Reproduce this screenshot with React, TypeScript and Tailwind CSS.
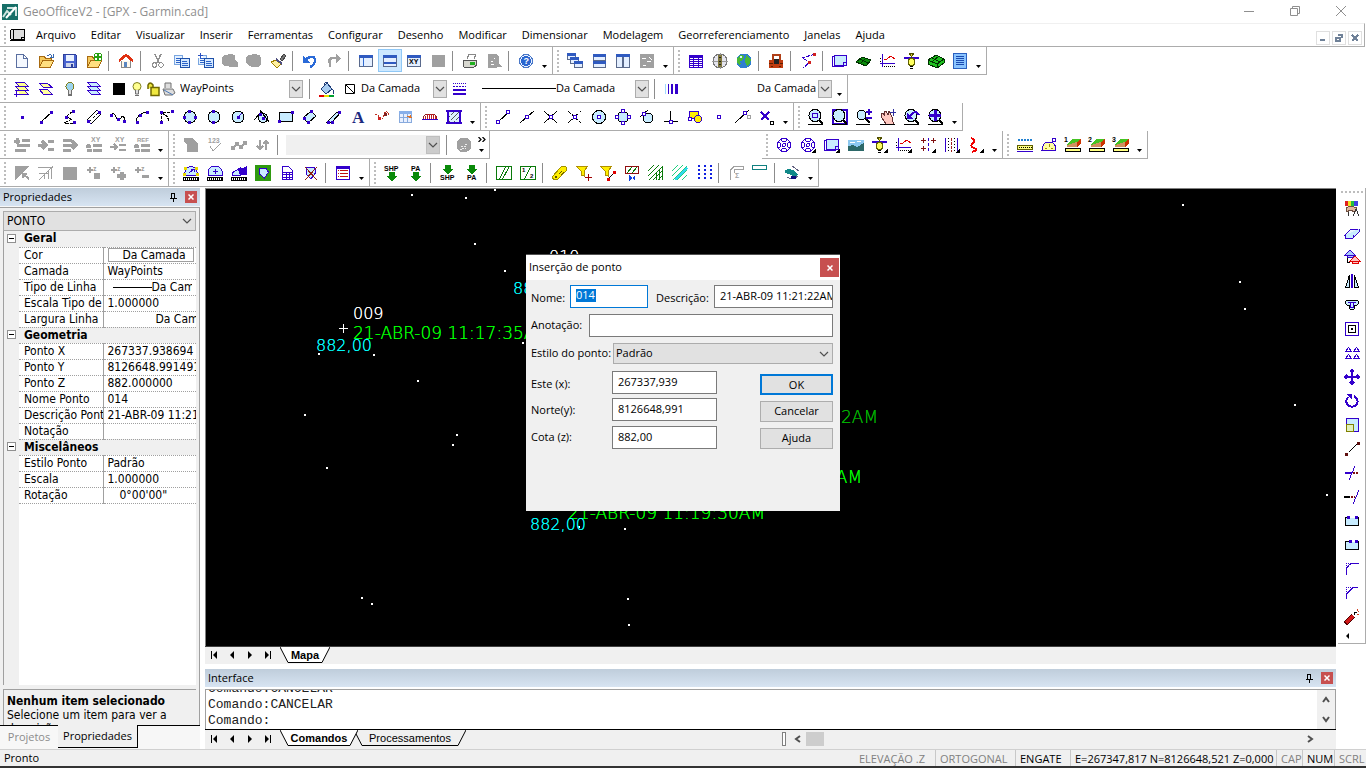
import { useState } from 'react';
import type { ReactNode } from 'react';

const INK = '#3300cc';
const SKY = '#c8ecff';
const GRAY = '#a0a0a0';

type PProps = { d: string; s?: string; f?: string; w?: number; dash?: string };

// Short path helper, all icons are drawn on a 16x16 grid
const P = ({ d, s = INK, f = 'none', w = 1, dash }: PProps) => (
  <path d={d} stroke={s} fill={f} strokeWidth={w} strokeDasharray={dash} />
);
const Dot = ({ x, y, c = INK }: { x: number; y: number; c?: string }) => (
  <rect x={x - 1} y={y - 1} width="3" height="3" fill={c} />
);
const Ring = ({ x, y, c = INK }: { x: number; y: number; c?: string }) => (
  <rect x={x - 1.5} y={y - 1.5} width="3" height="3" fill="#fff" stroke={c} />
);
const T = ({ x, y, c = '#000', size = 7, children }: { x: number; y: number; c?: string; size?: number; children: ReactNode }) => (
  <text x={x} y={y} fill={c} fontSize={size} fontFamily="Liberation Sans, sans-serif" fontWeight="bold">{children}</text>
);
const Corner = () => <P d="M16 11v5h-5z" s="none" f="#000" />;
const Lens = () => (
  <>
    <circle cx="7" cy="6.5" r="6" fill={SKY} stroke="#000" />
    <P d="M11 11l4 4" s="#000" w={2} />
    <P d="M0 15.5h15" s="#000" />
  </>
);
const Layers = ({ f }: { f: string }) => (
  <>
    <P d="M1.5 9.5h9l4 4h-9z" f={f} />
    <P d="M1.5 5.5h9l4 4h-9z" f={f} />
    <P d="M1.5 1.5h9l4 4h-9z" f={f} />
  </>
);
const Bulb = ({ c }: { c: string }) => (
  <>
    <circle cx="8" cy="5.5" r="4" fill={c} stroke="#808020" />
    <P d="M6.5 9v4h3V9M6 14.5h4" s="#707070" f="#ddd" />
  </>
);
const Folder = () => (
  <>
    <P d="M1.5 14V3.5h5l1 2h6V8" s="#a86a10" f="#f5c95c" />
    <P d="M1.5 14.5l3-7h11l-3 7z" s="#a86a10" f="#ffdf80" />
  </>
);
const Ramp = ({ n }: { n: string }) => (
  <>
    <P d="M2 10V7l5-5h9v2l-4 6z" s="none" f="#44c422" />
    <P d="M2 10V8l10-3v5z" s="none" f="#d09060" />
    <P d="M12 10V5l4-3v4z" s="none" f="#cc3300" />
    <rect x="0.5" y="11.5" width="15" height="3" fill="#ffff80" stroke="#000" />
    <T x={-1} y={5}>{n}</T>
  </>
);
const Pages = () => (
  <>
    <rect x="0.5" y="2.5" width="8" height="9" fill="#e4f1ff" stroke="#7aa6e0" />
    <rect x="6.5" y="5.5" width="9" height="9" fill="#d4e8ff" stroke="#1e50a8" />
    <P d="M2 5.5h4M2 7.5h4M2 9.5h4M8 8.5h5M8 10.5h6M8 12.5h6" s="#2a62c8" />
  </>
);
const Win = ({ x, y, w, h }: { x: number; y: number; w: number; h: number }) => (
  <>
    <rect x={x + 0.5} y={y + 0.5} width={w - 1} height={h - 1} fill="#e4efff" stroke="#5a6a8c" />
    <rect x={x} y={y} width={w} height="3" fill="#2f5ac0" />
  </>
);
const Target = () => (
  <>
    <circle cx="8" cy="8" r="6.5" stroke={INK} fill="#fff" />
    <circle cx="8" cy="8" r="1.5" stroke={INK} fill="none" />
    <P d="M5.5 2.5q0 2 2.5 2t2.5-2M2.5 5.5q2 0 2 2.5t-2 2.5M13.5 5.5q-2 0-2 2.5t2 2.5M5.5 13.5q0-2 2.5-2t2.5 2" />
  </>
);
const Plan = () => (
  <>
    <rect x="2.5" y="2.5" width="12" height="10" fill={SKY} stroke={INK} />
    <P d="M2.5 3.5H.5v10h11M11.5 12V9.5h3" />
  </>
);
const Profile = () => (
  <>
    <P d="M2.5 1v13M0 10.5h15" />
    <P d="M4 7l3-1 4-3 4 3" s="#e00000" />
    <P d="M4 13.5h11M0 5.5h2M0 8.5h2" s="#000" dash="1 1" />
  </>
);
const Lamp = () => (
  <>
    <P d="M0 5h15" w={2} />
    <P d="M5 0h5l-2.5 4z" s="#505000" f="#d8c830" />
    <circle cx="7.5" cy="9" r="3.5" fill="#ffff60" stroke="#606000" />
    <P d="M6 13.5h3M6 15.5h3" s="#000" />
  </>
);
const Measure = ({ children }: { children: ReactNode }) => (
  <>
    {children}
    <rect x="0.5" y="12.5" width="15" height="3" fill="#fff" stroke="#000" />
    <P d="M2 14h13" s="#000" dash="1 1" w={2} />
  </>
);
const Hatch = ({ s }: { s: string }) => <P d="M0 6l6-6M0 11L11 0M1 15L15 1M5 15L15 5M10 15l5-5" s={s} />;
const Arrow = ({ y }: { y: number }) => <P d={`M5 ${y}h6v4h3l-6 5-6-5h3z`} s="none" f="#0a8a0a" />;
const Funnel = () => <P d="M.5 1.5h11L8 6v5l-3-1V6z" s="#b09000" f="#ffee00" />;

const icons: Record<string, ReactNode> = {
  novo: <P d="M2.5 1.5h7l4 4v9h-11zM9.5 1.5v4h4" s="#5a6fa0" f="#f4f8ff" />,
  abrir: <><Folder /><P d="M9 3q4-3 5 1M12 4h3V1" s="#3a6ab0" /></>,
  salvar: <><P d="M1.5 1.5h12l1 1v12h-13z" s="#2c3f9c" f="#4a64d0" /><rect x="4" y="2" width="8" height="6" fill="#eaf2ff" /><rect x="4" y="10" width="8" height="4" fill="#cfd6ea" /><rect x="9" y="11" width="2" height="3" fill="#2c3f9c" /></>,
  adicionar: <><Folder /><circle cx="12" cy="4" r="4" fill="#fff" stroke="#28a010" /><P d="M12 1v6M9 4h6" s="#28a010" w={2} /></>,
  inicio: <><P d="M3.5 8v6.5h9V8" s="#888" f="#fff8ea" /><P d="M1 8l7-6 7 6" s="#e03010" w={2.5} /><rect x="6" y="9" width="3" height="5" fill="#5a86c0" /></>,
  recortar: <><P d="M5 1l4 9M11 1L7 10" s="#909090" w={1.5} /><circle cx="4.5" cy="12" r="2.2" stroke="#909090" fill="none" /><circle cx="11" cy="12" r="2.2" stroke="#909090" fill="none" /></>,
  copiar: <Pages />,
  copiarBase: <><Pages /><rect x="0" y="0" width="5" height="5" fill="#fff" /><P d="M2.5 0v5M0 2.5h5" s="#2a50c0" /></>,
  colar: <P d="M2 2h3l1-1h4l1 1h2v5l3 3v4H7l-1-1H2L0 10V4z" s="none" f={GRAY} />,
  colarEspecial: <P d="M2 2h3l1-1h4l1 1h3l1 3v6l-3 3H6l-4-2-2-3V4z" s="none" f={GRAY} />,
  pincel: <><P d="M10 6l4-5 2 2-4 5z" s="#444" f="#777" /><P d="M1 9l5-2 5 4-4 4z" s="#a08000" f="#fff0a0" /><P d="M6 6l6 5" s="#505080" w={2} /></>,
  desfazer: <><P d="M4 6q8-5 9 1 0 5-5 7" s="#2a6ad8" w={2.5} /><P d="M1 3v7h7z" s="none" f="#2a6ad8" /></>,
  refazer: <><P d="M11 5H6Q2 6 4 11v3" s={GRAY} w={2.5} /><P d="M10 1l5 4-5 5z" s="none" f={GRAY} /></>,
  painelEsq: <><Win x={1} y={2} w={14} h={12} /><P d="M5.5 5v8" s="#2f6ad0" /></>,
  painelInf: <><Win x={1} y={2} w={14} h={12} /><P d="M2 10h12" s="#2f5ac0" w={2} /></>,
  painelXY: <><Win x={1} y={2} w={14} h={12} /><T x={3} y={11} size={7}>XY</T></>,
  quadro: <rect x="2" y="2" width="13" height="12" fill={GRAY} />,
  imprimir: <><P d="M5 6l2-5h7l-2 5" s="#888" f="#fff" /><P d="M1 7h13l1 5-3 2H2z" s="#555" f="#d8d8d0" /><rect x="8" y="9" width="5" height="3" fill="#20b020" /></>,
  visualizarImp: <><P d="M2 1h8l3 3v6l3 4h-5l-1 1H2z" s="none" f={GRAY} /><P d="M5 8h2M8 5h1M5 11h3" s="#fff" /></>,
  ajuda: <><circle cx="8" cy="8" r="6.5" fill="#e8f0ff" stroke="#4a78c8" /><circle cx="8" cy="8" r="5" fill="#2a66d0" /><T x={5.5} y={11} c="#fff" size={9}>?</T></>,
  cascata: <><Win x={0} y={0} w={9} h={7} /><Win x={3} y={4} w={9} h={7} /><Win x={7} y={8} w={9} h={7} /></>,
  ladoH: <><Win x={2} y={1} w={13} h={7} /><Win x={2} y={8} w={13} h={7} /></>,
  ladoV: <><Win x={1} y={1} w={7} h={14} /><Win x={8} y={1} w={7} h={14} /></>,
  organizar: <><rect x="1" y="1" width="14" height="14" fill={GRAY} /><P d="M3 5h4M8 8h4M10 4l3 3M4 12h3" s="#fff" /></>,
  tabela: <><rect x="1" y="2" width="14" height="13" fill={INK} /><P d="M2 5.5h12M2 7.5h12M2 9.5h12M2 11.5h12M2 13.5h12" s="#fff" dash="3 1 4 1" /></>,
  bussola: <><circle cx="8" cy="8" r="7" fill="#e4e4ee" stroke="#777" /><P d="M0 8h16M8 0v16" s="#999" /><rect x="6" y="2" width="4" height="12" fill="#807840" /><P d="M7 4h2M7 8h2M7 11h2" s="#222" /></>,
  globo: <><circle cx="8" cy="8" r="7.5" fill="#2f7ed0" /><P d="M1 5q5-5 7-2l-1 4-3 1 1 3-2 1Q0 9 1 5zM10 2l5 4-1 5-3 2-2-4z" s="none" f="#48b838" /><circle cx="5" cy="4" r="1.5" fill="#d8f4ff" /></>,
  maleta: <><P d="M5 7V2h7v5" s="#b04018" w={2} /><P d="M1 7h14v8H1z" s="none" f="#c03c10" /><rect x="6" y="6" width="5" height="5" fill="#222" /><P d="M1 10h4M12 10h3M3 13h2M11 13h2" s="#602000" /></>,
  poligonal: <><P d="M15 1L2 5l8 4-7 6" dash="4 1" /><Dot x={14} y={1} c="#d02020" /><Dot x={9} y={9} c="#d02020" /></>,
  planta: <Plan />,
  terreno: <><P d="M0 9l6-5 9 3-5 6z" s="#003000" f="#0a8a0a" /><P d="M4 6l8 4M10 5l-6 6" s="#003000" /></>,
  perfil: <Profile />,
  secao: <Lamp />,
  terreno3d: <><P d="M0 7l8-5 8 4v4l-7 5-9-4z" s="#003000" f="#20c020" /><P d="M0 7l9 4 7-5M9 11v4M4 5l8 4M11 3L4 9" s="#003000" /></>,
  relatorio: <><rect x="1.5" y="0.5" width="13" height="15" fill="#8ac4ff" stroke="#2a60c0" /><P d="M4 3.5h8M4 5.5h8M4 7.5h8M4 9.5h8M4 11.5h8" s="#1a4ab0" /></>,

  camadaAtual: <><Layers f="#ffff90" /><rect x="0" y="11" width="5" height="5" fill="#fff" /><P d="M0 13.5h5M2.5 11v5" s={INK} /></>,
  camadas: <P d="M1.5 2.5h8l5 4h-9zM1.5 8.5h8l5 5h-9z" f="#ffffa0" />,
  lampada: <Bulb c="#9cd4ee" />,
  camadasAzul: <Layers f={SKY} />,
  balde: <><P d="M2 8l6-6 5 6-6 5z" s="#1e3c78" f="#a8ccf0" /><P d="M5 5q0-5 4-3M13 8q3 2 1 5" s="#1e3c78" /><P d="M0 15h5" s="#e00000" w={2} /><P d="M5 15h5" s="#e8e000" w={2} /><P d="M10 15h5" s="#00a030" w={2} /></>,
  tipoLinha: <><P d="M2 2.5h13" dash="1 1" /><P d="M2 5.5h13" dash="2 1" /><P d="M2 9h13M2 13h13" w={2} /></>,
  espessura: <><P d="M1.5 3v10" s="#a0d8ff" /><P d="M4.5 3v10" /><P d="M8 3v10" w={2} /><P d="M12.5 3v10" w={3} /></>,

  ponto: <Dot x={8} y={8} />,
  linha: <><P d="M3 13L14 3" s="#000" /><Dot x={3} y={13} /><Dot x={13} y={3} /></>,
  polilinha: <><P d="M11 2L4 8l6 2-8 4h12" s="#000" dash="4 1" /><Dot x={11} y={2} /><Dot x={4} y={8} /><Dot x={12} y={13} /></>,
  dupla: <><P d="M1 11L11 1M5 15L15 5" s="#000" /><P d="M3 13L13 3" s="#000" dash="3 2" /><P d="M1 11l4 4M11 1l4 4" /><Dot x={2} y={12} /><Dot x={13} y={3} /></>,
  spline: <><P d="M1 6q3-4 5 2t5 1 4 4" s="#000" /><Dot x={1} y={6} /><Dot x={8} y={10} /><Dot x={14} y={12} /></>,
  arco: <><P d="M2 13Q3 4 14 3" s="#000" /><Dot x={3} y={13} /><Dot x={6} y={6} /><Dot x={13} y={3} /></>,
  arcoTan: <><P d="M3.5 14V3.5h12M4 4q6 2 7 9M4 4l6 4" s="#000" dash="3 1" /><Dot x={3} y={3} /><Dot x={14} y={2} /><Dot x={3} y={13} /></>,
  circulo3: <><circle cx="8" cy="8" r="6" fill={SKY} stroke="#000" /><Dot x={7} y={2} /><Dot x={2} y={8} /><Dot x={13} y={8} /><Dot x={7} y={13} /></>,
  circulo2: <><circle cx="8" cy="8" r="6" fill={SKY} stroke="#000" /><Dot x={7} y={2} /><Dot x={7} y={13} /></>,
  circuloR: <><circle cx="8" cy="8" r="6" fill={SKY} stroke="#000" /><P d="M8 8l4-4" /><Dot x={8} y={8} /></>,
  circuloTan: <><circle cx="9" cy="9" r="4.5" fill={SKY} stroke="#000" /><P d="M0 11L8 2M6 1l9 12" s="#000" /><Dot x={6} y={5} /><Dot x={9} y={9} /></>,
  retangulo: <><rect x="1.5" y="3.5" width="13" height="9" fill={SKY} stroke="#000" /><Dot x={1} y={12} /><Dot x={14} y={3} /></>,
  retInclinado: <><P d="M1 9l8-7 5 5-8 7z" s="#000" f={SKY} /><Dot x={2} y={9} /><Dot x={9} y={2} /><Dot x={6} y={13} /></>,
  paralelo: <><P d="M1 13L11 3h4L6 13z" s="#000" f={SKY} /><Dot x={2} y={13} /><Dot x={13} y={3} /><Dot x={6} y={13} /></>,
  texto: <text x="2" y="14" fontSize="17" fontWeight="bold" fontFamily="Liberation Serif, serif" fill="#1c2a80">A</text>,
  textoCurvo: <><P d="M1 6q3-1 5 3t4-3 5 0" s="#c03020" dash="2 1" /><Dot x={5} y={9} c="#d02020" /><Dot x={11} y={5} c="#802020" /></>,
  tabelaCad: <><rect x="1.5" y="2.5" width="12" height="11" fill="#e8f0ff" stroke="#88aadd" /><rect x="1" y="2" width="13" height="3" fill="#88b0ea" /><P d="M5.5 5v8M9.5 5v8M2 8.5h11" s="#88aadd" /><P d="M8 8l5-2 1 3z" s="none" f="#e07020" /></>,
  medir: <><P d="M1 10q1-5 5-5h4q4 0 5 5z" s="#902020" f="#fff" /><P d="M5.5 5v5M7.5 5v5M9.5 5v5M11.5 5v5M3.5 7v3M13.5 7v3" s="#c02020" /><P d="M0 10.5h16" /></>,
  hachura: <><rect x="2" y="2" width="12" height="12" fill="#dcefff" stroke={INK} strokeWidth="2" /><P d="M3 8l5-5M3 13L13 3M8 13l5-5" s="#555" dash="2 1" /><P d="M0 2h16M0 14h16" w={2} /></>,

  fim: <><P d="M3 13L14 3" s="#000" /><Ring x={3} y={13} /><Ring x={13} y={3} /></>,
  meio: <><P d="M1 14L15 2" s="#000" /><Ring x={8} y={8} /></>,
  inter: <><P d="M1 2l13 12M1 14L14 2" s="#000" /><Ring x={8} y={8} /></>,
  interAp: <><P d="M1 2l13 12" s="#000" dash="4 1" /><P d="M1 14L14 2" s="#000" dash="6 2" /><Ring x={8} y={8} /></>,
  centro: <><circle cx="8" cy="8" r="6.5" fill={SKY} stroke="#000" /><Ring x={8} y={8} /></>,
  quadrante: <><circle cx="8" cy="8" r="5.5" fill={SKY} stroke="#000" /><Ring x={8} y={2} /><Ring x={2} y={8} /><Ring x={14} y={8} /><Ring x={8} y={14} /></>,
  tangente: <><circle cx="9" cy="9" r="5" fill={SKY} stroke="#000" /><P d="M1 8l8-7" s="#000" /><Ring x={5} y={5} /></>,
  perp: <><P d="M1 12.5h14M7.5 2v10" s="#000" /><Ring x={8} y={13} /></>,
  insercao: <><rect x="2.5" y="2.5" width="9" height="7" fill="#ffee00" stroke={INK} /><circle cx="11" cy="10" r="3.5" fill="#ffee00" stroke={INK} /><Ring x={3} y={10} /></>,
  no: <Ring x={8} y={8} />,
  proximo: <><P d="M0 14L14 1" s="#000" /><Ring x={10} y={4} /><Ring x={14} y={8} c={GRAY} /></>,
  semSnap: <><P d="M2 3l8 8M10 3l-8 8" w={2.5} /><Ring x={13} y={14} c="#000" /></>,

  zoomJan: <><Lens /><rect x="4.5" y="4.5" width="5" height="4" fill="none" stroke={INK} strokeWidth="1" /></>,
  zoomExt: <><rect x="1" y="1" width="14" height="14" fill="#fff" stroke={INK} strokeWidth="2" /><Lens /></>,
  zoomMais: <><circle cx="5.5" cy="6" r="4.5" fill={SKY} stroke="#000" /><P d="M9 9l5 5" s="#000" w={2} /><P d="M0 15.5h14" s="#000" /><P d="M10 3h6M13 0v6M10 9h6" w={2} /></>,
  mao: <><P d="M1 5l2-1 2 3-1-5 2 0 2 4 1-4 3 6v3l2 4H6L2 9z" s="#603030" f="#ffc8c0" /><P d="M13.5 0v7M10 3.5h6" s="#3030a0" /><P d="M0 15.5h15" s="#000" /></>,
  zoomAnt: <><Lens /><P d="M5 8l4-4q4-2 6 2" w={2} /><P d="M3 4v6h6z" s="none" f={INK} /></>,
  zoomTudo: <><Lens /><P d="M7 1v11M1 6.5h12" w={3} /></>,

  gInserir: <P d="M0 4h6M3 1v6M8 3h8M3 8h13M1 13h11" s={GRAY} w={3} />,
  gMover: <P d="M0 8h7M4 4l4 4-4 4M10 4h6M10 12h6" s={GRAY} w={3} />,
  gEmpurrar: <P d="M1 3h9M1 8h11M10 4l4 4-4 4M1 13h8" s={GRAY} w={3} />,
  gXY1: <><T x={5} y={5} c={GRAY}>XY</T><P d="M0 9h5M2.5 7v4M7 8h9M1 13h5M7 13h9" s={GRAY} w={3} /></>,
  gXY2: <><T x={5} y={5} c={GRAY}>XY</T><P d="M0 10h6M4 7l3 3-3 3M9 8h7M9 13h7" s={GRAY} w={2.5} /></>,
  gREF: <><T x={3} y={5} c={GRAY} size={6}>REF</T><P d="M0 9h5M2.5 7v4M7 8h9M1 13h5M7 13h9" s={GRAY} w={3} /></>,
  gPagina: <P d="M1 1h8l6 5v9H4V7L1 5z" s="none" f={GRAY} />,
  g123: <><T x={1} y={6} c={GRAY}>123</T><P d="M3 9l3 5 8-8" s={GRAY} /></>,
  gTroca: <P d="M1 12l6-6M4 6h3v3M9 11l6-6M12 5h3v3M1 9v3h3M9 8v3h3" s={GRAY} w={1.5} />,
  gOrdem: <P d="M5 3v9M2 9l3 3 3-3M11 13V4M8 7l3-3 3 3" s={GRAY} w={2} />,
  gCookie: <><circle cx="8" cy="8" r="7.5" fill={GRAY} /><P d="M5 9.5h6M9 7.5h3M6 11.5h4M4 12.5h3" s="#eee" dash="2 1" /></>,
  alvo: <Target />,
  alvoMenu: <><Target /><Corner /></>,
  plantaMenu: <><Plan /><Corner /></>,
  foto: <><rect x="0" y="3" width="16" height="11" fill="#8cc8f0" /><P d="M0 9l5-1 4 2 7-4v8H0z" s="none" f="#2c6868" /><P d="M2 5h5M9 4h4" s="#fff" /></>,
  secaoMenu: <><Lamp /><Corner /></>,
  perfilMenu: <><Profile /><Corner /></>,
  estacas: <><P d="M8.5 1v14" dash="3 2" /><P d="M1 3.5h5M3.5 1v5M1 11.5h5M3.5 9v5M11 3.5h5M13.5 1v5" s="#801010" /><Corner /></>,
  faixas: <><P d="M1.5 1v14M13.5 1v14" /><P d="M4.5 1v14M10.5 1v14" s="#000" dash="1 2" /><P d="M7.5 1v14" s="#a02020" dash="3 1" /><Corner /></>,
  rio: <><P d="M3 1q6 2 2 5t1 5-2 4" s="#f00000" w={2} /><Corner /></>,
  trena: <><P d="M1 3h14" s="#2080d0" w={2} dash="2 1" /><rect x="0.5" y="8.5" width="15" height="4" fill="#ffff80" stroke="#606000" /><P d="M2 10h13" s="#000" dash="1 1" /><P d="M0 14.5h16" /></>,
  transferidor: <><P d="M1 13.5Q1 5 8 5t7 8.5z" f="#ffffa0" /><P d="M4 11h2M8 7v3M10 11h2" s="#a09000" /><Ring x={13} y={3} /></>,
  rampa1: <Ramp n="1" />,
  rampa2: <Ramp n="2" />,
  rampa3: <Ramp n="3" />,

  gTriang: <><P d="M1 1h14L1 15z" s="none" f={GRAY} /><P d="M9 9l6 5M9 13V9h4" s={GRAY} w={2} /></>,
  gLeque: <P d="M0 2.5h15M15 1L1 15M1 8.5h9M6.5 14V8M10.5 14V5M13.5 14V3" s={GRAY} />,
  gBloco: <rect x="1" y="2" width="14" height="13" fill={GRAY} />,
  gZ1: <><T x={7} y={6} c={GRAY}>z</T><P d="M1 5h6M4 2v6" s={GRAY} w={2} /><circle cx="11" cy="11" r="3.5" fill={GRAY} /></>,
  gZ2: <><T x={7} y={6} c={GRAY}>z</T><P d="M1 5h6M4 2v6" s={GRAY} w={2} /><P d="M7 11h9M11.5 7v8" s={GRAY} w={4} /></>,
  gZ3: <><T x={7} y={6} c={GRAY}>z</T><P d="M1 5h6M4 2v6" s={GRAY} w={2} /><P d="M8 11.5h7" s={GRAY} w={3} /></>,
  area1: <Measure><P d="M1 10L3 4q5-5 10 0l2 6z" f={SKY} /><P d="M6 8l4-3M8 4h3v3" /><Dot x={2} y={3} c="#e8d800" /><Dot x={13} y={3} c="#e8d800" /><Dot x={1} y={9} c="#e8d800" /><Dot x={14} y={9} c="#e8d800" /></Measure>,
  area2: <Measure><P d="M1 10V6q2-5 7-5t7 5v4z" f={SKY} /><P d="M8.5 4v5M6 6.5h5" /></Measure>,
  area3: <Measure><P d="M1 10V8l8-5v7z" f={SKY} /><P d="M7 5l9-4v9H9z" s="none" f={INK} /></Measure>,
  parcela: <><rect x="0" y="0" width="16" height="16" fill="#2f9a10" /><P d="M4.5 3h6l3 4-4 6-5-4z" f={SKY} /></>,
  planilha: <><P d="M3.5 1.5h6l4 4v9h-10z" f="#fff" /><P d="M4 7.5h9M4 9.5h9M4 12.5h9M7.5 7v7M10.5 7v7" /></>,
  apagarLote: <><P d="M4 2h7l2 5-5 7-5-5z" f={SKY} /><P d="M2 2l12 13M14 2L2 15" s="#902010" /></>,
  lista: <><rect x="1.5" y="1.5" width="13" height="13" fill="#fff" stroke={INK} /><P d="M1 2.5h14" w={2} /><P d="M3 5.5h1M5 5.5h8M3 8.5h1M5 8.5h8M3 11.5h1M5 11.5h8" s="#c01010" /></>,
  shpOut: <><T x={0} y={6} size={7}>SHP</T><Arrow y={7} /></>,
  paOut: <><T x={3} y={6} size={7}>PA</T><Arrow y={7} /></>,
  shpIn: <><Arrow y={0} /><T x={0} y={15} size={7}>SHP</T></>,
  paIn: <><Arrow y={0} /><T x={3} y={15} size={7}>PA</T></>,
  lote: <><rect x="0.5" y="1.5" width="15" height="13" fill="#fff" stroke="#0a7a0a" /><P d="M3 15L10 1M6 15l7-13" s="#0a7a0a" /></>,
  loteNum: <><rect x="0.5" y="1.5" width="15" height="13" fill="#fff" stroke="#0a7a0a" /><P d="M4 15L11 1" s="#0a7a0a" /><T x={2} y={7} size={6}>1</T><T x={10} y={13} size={6}>2</T></>,
  etiqueta: <><P d="M1 11l7-8q3-3 6-1 2 3-1 5l-7 7q-6 3-5-3z" s="#a09000" f="#ffee00" /><circle cx="4" cy="12" r="1" fill="#fff" stroke="#605000" /><P d="M7 9l3-3M9 10l3-3" s="#605000" /></>,
  filtroPonto: <><Funnel /><P d="M12.5 9v7M9 12.5h7" s="#a00000" /></>,
  filtroLinha: <><Funnel /><P d="M7 15l8-8" s="#000" /><Dot x={14} y={7} c="#e00000" /><Dot x={8} y={14} c="#e00000" /></>,
  filtroArea: <><rect x="1.5" y="1.5" width="13" height="7" fill="#fff" stroke="#901010" /><P d="M3 8l5-6M8 8l5-6" s="#0a7a0a" /><P d="M5 10v6l3-3 3 3v-6l-3 3z" s="none" f="#1040e0" /></>,
  hachVerde: <><Hatch s="#0a7a0a" /><P d="M8.5 15V7M11.5 15V4M14.5 15V1" s="#0a7a0a" /></>,
  hachCiano: <><Hatch s="#20d080" /><P d="M3 15L15 3" s="#30d8f0" w={2} /></>,
  pontos: <P d="M2.5 0v16M8.5 0v16M14.5 0v16" s="#1020e0" w={2} dash="2 2" />,
  gSigma: <><P d="M2.5 15V5l4-4h9v3H6.5v4" s={GRAY} /><T x={7} y={13} c={GRAY}>Σ</T></>,
  barra: <rect x="0.5" y="0.5" width="14" height="4" rx="1" fill="#fff" stroke="#108080" />,
  satelite: <><P d="M1 5q8-3 13 5l-3 2Q5 9 1 8z" s="none" f="#108888" /><P d="M8 1l7 5M3 12q6 4 11-1" s="#606080" /><rect x="7" y="11" width="5" height="3" fill="#101080" /></>,

  propriedades: <><rect x="1" y="0" width="3" height="5" fill="#e02020" /><rect x="4" y="0" width="3" height="5" fill="#f0e020" /><rect x="7" y="0" width="3" height="5" fill="#20c040" /><rect x="10" y="0" width="4" height="5" fill="#4040e0" /><P d="M2 7q5-3 11 0l-2 4-5-2-3 2z" s="#705040" f="#e0b8a0" /><P d="M4 11v4M12 8l-3 7M12 8l3 7" s="#333" /></>,
  borracha: <><P d="M1 10l6-6h8l-6 6z" f="#e8f6ff" /><P d="M1 10v3h8l6-6V4M9 10v3" f={SKY} /></>,
  copiarObj: <><P d="M1 6l5-5 5 5zM3 6h6v2H3z" f="#a8c8ff" /><P d="M6 12l5-5 5 5zM8 12h6v2H8z" s="#e00000" f="#ffc0c0" /><P d="M3 9v4h3" s="#000" /></>,
  espelhar: <><P d="M1.5 14.5h4V2z" s="#000" f={SKY} /><P d="M14.5 14.5h-4V2z" s="#000" f={SKY} /><P d="M8 1v14" w={2} /></>,
  offset: <><P d="M3 3h10q3 2 0 5h-2q0 5-3 5T5 8H3q-3-3 0-5z" s="#000" f={SKY} /><P d="M4 5.5h8M6.5 6v4h3V6" /></>,
  escalaQ: <><rect x="1.5" y="1.5" width="13" height="13" fill="#fff" stroke={INK} /><rect x="4.5" y="4.5" width="7" height="7" fill="none" stroke="#000" /><rect x="7" y="7" width="2" height="2" fill="#000" /></>,
  matriz: <P d="M1.5 6.5l3-4 3 4zM9.5 6.5l3-4 3 4zM1.5 13.5l3-4 3 4zM9.5 13.5l3-4 3 4z" />,
  mover: <P d="M8 1v14M1 8h14M6 3l2-2 2 2M6 13l2 2 2-2M3 6L1 8l2 2M13 6l2 2-2 2" w={1.5} />,
  girar: <><P d="M10 3q5 3 3 8-3 4-8 2-5-4-1-9" w={2} /><P d="M2 1h6v6z" s="none" f={INK} /></>,
  escala: <><rect x="2.5" y="1.5" width="12" height="13" fill={SKY} stroke={INK} /><rect x="2.5" y="7.5" width="7" height="7" fill="#e0f0c0" stroke="#808000" /></>,
  esticar: <><P d="M3 13L13 3" s="#000" dash="2 1" /><Dot x={2} y={13} c="#601010" /><Dot x={14} y={2} c="#601010" /></>,
  aparar: <><P d="M5 15l6-14" /><P d="M1 8h7" w={2} /><P d="M9 8h6" s="#801010" w={2} dash="2 1" /></>,
  estender: <><P d="M9 15l6-14" /><P d="M0 8h6" s="#000" w={2} /><P d="M7 8h4" s="#801010" w={2} dash="2 1" /></>,
  quebrar: <><P d="M4 4.5H1.5v8h13v-8H12" s="#000" f={SKY} /><Dot x={4} y={4} /><Dot x={12} y={4} /></>,
  quebrar2: <><P d="M6 4.5H1.5v8h13v-8H12" s="#000" f={SKY} /><Dot x={6} y={4} /><Dot x={12} y={4} /></>,
  concordar: <><P d="M2.5 14V9q1-6 7-6.5h5" /><P d="M2.5 9V2.5H9" dash="1 1" /></>,
  chanfrar: <><P d="M2.5 14V9L9 2.5h5" /><P d="M2.5 9V2.5H9" dash="1 1" /></>,
  explodir: <><P d="M1 15L9 7" s="#500000" w={5} /><P d="M2 14L9 7" s="#d01818" w={3} /><P d="M10 6q0-3 3-3" s="#000" /><P d="M13 0v2M15 2l-1 1M15 5h-2" s="#d04020" /></>,
};

const Icon = ({ name }: { name: string }) => (
  <svg viewBox="0 0 16 16" shapeRendering="crispEdges" className="h-4 w-4 shrink-0 overflow-visible" aria-hidden="true">{icons[name]}</svg>
);

const Caret = () => (
  <span className="flex h-full w-[14px] items-end justify-center pb-[6px] pr-[2px]">
    <svg viewBox="0 0 5 3" className="h-[3px] w-[5px]"><path d="M0 0h5L2.5 3z" /></svg>
  </span>
);
const Chevron = () => (
  <svg viewBox="0 0 10 6" className="h-[6px] w-[10px]" fill="none" stroke="#505050" strokeWidth="1.2"><path d="M1 1l4 4 4-4" /></svg>
);
const Sep = () => <span className="ml-[2px] mr-[5px] h-5 w-px bg-[#8c8c8c]" />;

const ToolButton = ({ name, active }: { name: string; active?: boolean }) => (
  <button
    type="button"
    aria-label={name}
    className={`flex h-[23px] w-6 shrink-0 items-center justify-center ${active ? 'border border-[#90c8f6] bg-[#cce8ff]' : ''}`}
  >
    <Icon name={name} />
  </button>
);

const Items = ({ items }: { items: string }) => (
  <>
    {items.split(' ').map((it, i) => (it === '|' ? <Sep key={i} /> : <ToolButton key={i} name={it} active={it === 'painelInf'} />))}
  </>
);

const Toolbar = ({ items, children, className = '' }: { items?: string; children?: ReactNode; className?: string }) => (
  <div className={`flex h-7 shrink-0 items-center border-b border-r border-[#acacac] ${className}`}>
    <span className="ml-1 mr-1 h-[22px] w-[2px] bg-[repeating-linear-gradient(#bdbdbd_0_2px,transparent_2px_4px)]" />
    {items && <Items items={items} />}
    {children}
    <Caret />
  </div>
);

type ComboProps = { label: string; value: string; className: string };
const Combo = ({ label, value, className }: ComboProps) => (
  <div className={`relative flex items-center ${className}`}>
    <select aria-label={label} className="h-5 w-full appearance-none bg-transparent pr-[14px] text-[11px]">
      <option>{value}</option>
    </select>
    <span className="pointer-events-none absolute right-0 flex h-[18px] w-[14px] items-center justify-center border border-[#acacac] bg-[#e1e1e1]">
      <Chevron />
    </span>
  </div>
);

const menus = ['Arquivo', 'Editar', 'Visualizar', 'Inserir', 'Ferramentas', 'Configurar', 'Desenho', 'Modificar', 'Dimensionar', 'Modelagem', 'Georreferenciamento', 'Janelas', 'Ajuda'];

const Mdi = ({ d, label }: { d: string; label: string }) => (
  <button type="button" aria-label={label} className="flex h-[14px] w-[14px] items-center justify-center border border-[#e0e0e0]">
    <svg viewBox="0 0 8 8" className="h-2 w-2" fill="none" stroke="#6f8198" strokeWidth="2" shapeRendering="crispEdges"><path d={d} /></svg>
  </button>
);

const CloseX = ({ className }: { className: string }) => (
  <button type="button" aria-label="Fechar" className={`flex items-center justify-center bg-[#c75050] ${className}`}>
    <svg viewBox="0 0 6 6" className="h-[6px] w-[6px]" stroke="#fff" strokeWidth="1.5"><path d="M0.5 0.5l5 5M5.5 0.5l-5 5" /></svg>
  </button>
);

const PaneHeader = ({ title }: { title: string }) => (
  <div className="flex h-[18px] shrink-0 items-center bg-linear-to-b from-[#bfcddb] to-[#d7e4f2] pl-[3px] pr-[3px] text-[11px]">
    <span className="flex-1">{title}</span>
    <svg viewBox="0 0 8 10" className="mr-2 h-[10px] w-2" fill="none" stroke="#000" shapeRendering="crispEdges"><path d="M2.5 6V1.5h3V6M5 1v5M0.5 6.5h7M4 7v3" /></svg>
    <CloseX className="h-3 w-3" />
  </div>
);

type Row = [string, string, ('swatch' | 'line' | 'right' | 'center')?];
const groups: { name: string; rows: Row[] }[] = [
  {
    name: 'Geral',
    rows: [
      ['Cor', 'Da Camada', 'swatch'],
      ['Camada', 'WayPoints'],
      ['Tipo de Linha', 'Da Camada', 'line'],
      ['Escala Tipo de Linha', '1.000000'],
      ['Largura Linha', 'Da Camada', 'right'],
    ],
  },
  {
    name: 'Geometria',
    rows: [
      ['Ponto X', '267337.938694'],
      ['Ponto Y', '8126648.991491'],
      ['Ponto Z', '882.000000'],
      ['Nome Ponto', '014'],
      ['Descrição Ponto', '21-ABR-09 11:21:22AM'],
      ['Notação', ''],
    ],
  },
  {
    name: 'Miscelâneos',
    rows: [
      ['Estilo Ponto', 'Padrão'],
      ['Escala', '1.000000'],
      ['Rotação', '0°00\'00"', 'center'],
    ],
  },
];

const Value = ({ text, kind }: { text: string; kind?: string }) => {
  if (kind === 'swatch') return <span className="mr-[2px] block h-[14px] border border-[#a0a0a0] pl-[14px] leading-[13px]">{text}</span>;
  if (kind === 'line') {
    return (
      <span className="mr-1 flex items-center overflow-hidden pl-[5px]">
        <span className="h-px w-[39px] shrink-0 bg-black" />
        {text}
      </span>
    );
  }
  if (kind === 'right') return <span className="block overflow-hidden pl-12">{text}</span>;
  return <span className={kind === 'center' ? 'pl-3' : ''}>{text}</span>;
};

function Properties() {
  return (
    <aside className="flex w-[200px] shrink-0 flex-col bg-[#f7f7f7]">
      <PaneHeader title="Propriedades" />
      <div className="mt-[1px] flex min-h-0 flex-1 flex-col border-r border-t border-[#a0a0a0] bg-[#f0f0f0] pl-[3px] pr-[3px] pt-[3px] text-[12px] font-[DejaVu_Sans_Condensed,DejaVu_Sans,sans-serif]">
        <div className="relative flex shrink-0 items-center">
          <select aria-label="Tipo de objeto" className="h-5 w-full appearance-none border border-[#acacac] bg-[#e1e1e1] pl-[3px]">
            <option>PONTO</option>
          </select>
          <span className="pointer-events-none absolute right-1"><Chevron /></span>
        </div>
        <div className="min-h-0 flex-1 overflow-hidden border-l border-[#a0a0a0] bg-white bg-[linear-gradient(#f0f0f0,#f0f0f0)] bg-[length:15px_100%] bg-no-repeat">
          <table className="w-full table-fixed border-collapse">
            <colgroup>
              <col className="w-[15px]" />
              <col className="w-[84px]" />
              <col />
            </colgroup>
            {groups.map(g => (
              <tbody key={g.name}>
                <tr className="h-4 bg-[#f0f0f0] leading-[15px]">
                  <td className="p-0 pt-[3px] align-top">
                    <button type="button" aria-label={`Recolher ${g.name}`} className="ml-[3px] flex h-[9px] w-[9px] items-center justify-center border border-[#909090] bg-white">
                      <span className="h-px w-[5px] bg-black" />
                    </button>
                  </td>
                  <th colSpan={2} className="p-0 pl-[5px] text-left font-bold">{g.name}</th>
                </tr>
                {g.rows.map(([label, text, kind]) => (
                  <tr key={label} className="h-4 leading-[15px]">
                    <td className="p-0" />
                    <th className="overflow-hidden whitespace-nowrap border-y border-r border-dotted border-[#a0a0a0] p-0 pl-[5px] text-left font-normal [border-right-style:solid]">{label}</th>
                    <td className="overflow-hidden whitespace-nowrap border-y border-dotted border-[#a0a0a0] p-0 pl-1">
                      <Value text={text} kind={kind} />
                    </td>
                  </tr>
                ))}
              </tbody>
            ))}
          </table>
        </div>
        <div className="mt-1 h-9 shrink-0 overflow-hidden border-l border-t border-[#a0a0a0] pl-[3px] pt-[4px] leading-[14px]">
          <p className="font-bold">Nenhum item selecionado</p>
          <p>Selecione um item para ver a descrição</p>
        </div>
      </div>
      <div className="flex h-[24px] shrink-0 text-[11px]">
        <button type="button" className="h-full w-[58px] border-t border-black text-[#8c8c8c]">Projetos</button>
        <button type="button" className="h-[23px] w-20 border-b border-r border-black bg-[#f0f0f0]">Propriedades</button>
        <span className="flex-1 border-t border-black" />
      </div>
    </aside>
  );
}

const stars = [[411, 194], [465, 197], [494, 189], [474, 243], [504, 270], [417, 380], [304, 414], [456, 434], [452, 444], [326, 467], [361, 597], [371, 603], [627, 598], [628, 624], [624, 528], [578, 526], [1182, 204], [1239, 281], [1244, 308], [1294, 404], [1326, 494], [373, 354], [318, 353], [522, 342]];

const marks = [
  { text: '009', x: 353, y: 305, c: 'text-[16px] text-white' },
  { text: '882,00', x: 316, y: 337, c: 'text-[16px] text-[#00ffff]' },
  { text: '21-ABR-09 11:17:35AM', x: 353, y: 324, c: 'text-[17px] text-[#00ff00]' },
  { text: '010', x: 549, y: 248, c: 'text-[16px] text-white' },
  { text: '882,00', x: 513, y: 280, c: 'text-[16px] text-[#00ffff]' },
  { text: '21-ABR-09 11:19:30AM', x: 568, y: 504, c: 'text-[17px] text-[#00ff00]' },
  { text: '882,00', x: 530, y: 516, c: 'text-[16px] text-[#00ffff]' },
  { text: '21-ABR-09 11:18:10AM', x: 665, y: 468, c: 'text-[17px] text-[#00ff00]' },
  { text: '21-ABR-09 11:21:22AM', x: 681, y: 408, c: 'text-[17px] text-[#00b400]' },
];

// Drawing area origin in window coordinates
const ORIGIN = { x: 206, y: 189 };

const Field = ({ label, value, className }: { label: string; value: string; className: string }) => {
  const [text, setText] = useState(value);
  return (
    <input
      id={label}
      value={text}
      onChange={e => setText(e.target.value)}
      className={`h-[23px] min-w-0 border border-[#7a7a7a] bg-white pb-[2px] pl-[5px] text-[11px] outline-none ${className}`}
    />
  );
};

function PointDialog() {
  return (
    <form role="dialog" aria-label="Inserção de ponto" onSubmit={e => e.preventDefault()} className="absolute left-[320px] top-[65px] h-[257px] w-[314px] border-t border-[#505050] bg-[#f0f0f0] text-[11px]">
      <div className="flex h-[25px] items-center bg-white pl-[3px] pr-[1px]">
        <h2 className="flex-1">Inserção de ponto</h2>
        <CloseX className="h-[19px] w-[19px]" />
      </div>
      <div className="flex flex-col gap-[6px] pl-[5px] pr-[7px] pt-[5px]">
        <div className="flex items-center">
          <label htmlFor="nome" className="w-[39px] pt-1">Nome:</label>
          <div className="flex h-[23px] w-[78px] items-start border border-[#0078d7] bg-white pl-[5px] pt-[3px]">
            <input id="nome" defaultValue="014" size={3} className="h-[13px] w-5 bg-[#0078d7] text-[11px] text-white outline-none" />
          </div>
          <label htmlFor="descricao" className="ml-2 w-[58px] pt-1">Descrição:</label>
          <Field label="descricao" value="21-ABR-09 11:21:22AM" className="flex-1" />
        </div>
        <div className="flex items-center">
          <label htmlFor="anotacao" className="w-[58px]">Anotação:</label>
          <Field label="anotacao" value="" className="flex-1" />
        </div>
        <div className="flex items-center">
          <label htmlFor="estilo" className="w-[82px] whitespace-nowrap">Estilo do ponto:</label>
          <div className="relative flex flex-1 items-center">
            <select id="estilo" className="h-[21px] w-full appearance-none border border-[#acacac] bg-[#e1e1e1] pl-[2px]">
              <option>Padrão</option>
            </select>
            <span className="pointer-events-none absolute right-1"><Chevron /></span>
          </div>
        </div>
        <div className="mt-px flex justify-between">
          <div className="grid grid-cols-[81px_105px] items-center gap-y-1">
            <label htmlFor="este" className="pt-1">Este (x):</label>
            <Field label="este" value="267337,939" className="w-full" />
            <label htmlFor="norte">Norte(y):</label>
            <Field label="norte" value="8126648,991" className="w-full" />
            <label htmlFor="cota">Cota (z):</label>
            <Field label="cota" value="882,00" className="w-full" />
          </div>
          <div className="flex w-[73px] flex-col gap-[6px] pt-[3px]">
            <button type="submit" className="h-[21px] border-2 border-[#0078d7] bg-[#e1e1e1] leading-[17px]">OK</button>
            <button type="button" className="h-[21px] border border-[#adadad] bg-[#e1e1e1]">Cancelar</button>
            <button type="button" className="h-[21px] border border-[#adadad] bg-[#e1e1e1]">Ajuda</button>
          </div>
        </div>
      </div>
    </form>
  );
}

function Canvas() {
  return (
    <div className="relative min-h-0 flex-1 overflow-hidden border-l border-t border-[#808080] bg-black">
      {stars.map(([x, y]) => (
        <span key={`${x}-${y}`} className="absolute h-[2px] w-[2px] bg-white" style={{ left: x - ORIGIN.x, top: y - ORIGIN.y }} />
      ))}
      {marks.map(m => (
        <span
          key={`${m.x}-${m.y}`}
          className={`absolute whitespace-nowrap leading-[18px] font-extralight font-[DejaVu_Sans,sans-serif] [text-shadow:0_0_0_currentColor] ${m.c}`}
          style={{ left: m.x - ORIGIN.x, top: m.y - ORIGIN.y }}
        >
          {m.text}
        </span>
      ))}
      <svg viewBox="0 0 9 9" className="absolute left-[133px] top-[135px] h-[9px] w-[9px]" stroke="#fff"><path d="M4.5 0v9M0 4.5h9" /></svg>
      <PointDialog />
    </div>
  );
}

const navs = [['Primeira', 'M1 0h1v8H1zM7 0v8L3 4z'], ['Anterior', 'M6 0v8L2 4z'], ['Próxima', 'M2 0v8l4-4z'], ['Última', 'M1 0v8l4-4zM6 0h1v8H6z']];
const NavButtons = () => (
  <div className="mr-[3px] flex h-full items-center pb-[2px]">
    {navs.map(([label, d]) => (
      <button key={label} type="button" aria-label={label} className="flex w-[18px] justify-center">
        <svg viewBox="0 0 8 8" className="h-2 w-2"><path d={d} /></svg>
      </button>
    ))}
  </div>
);

type TabProps = { label: string; active?: boolean; width: number; className: string };
const SheetTab = ({ label, active, width, className }: TabProps) => (
  <button type="button" className={`relative h-4 font-[Liberation_Sans,sans-serif] text-[11px] leading-4 ${active ? 'font-bold' : ''} ${className}`}>
    <svg viewBox={`0 0 ${width} 16`} className="absolute inset-0 h-full w-full">
      <path d={`M0 0L8 15.5H${width - 8}L${width} 0`} fill={active ? '#fff' : '#f0f0f0'} stroke="#000" />
    </svg>
    <span className="relative">{label}</span>
  </button>
);

const ScrollArrow = ({ d, label }: { d: string; label: string }) => (
  <button type="button" aria-label={label} className="flex h-4 w-4 items-center justify-center">
    <svg viewBox="0 0 8 8" className="h-2 w-2" fill="none" stroke="#505050" strokeWidth="2"><path d={d} /></svg>
  </button>
);

function Console() {
  return (
    <section className="mt-[5px] flex shrink-0 flex-col">
      <PaneHeader title="Interface" />
      <div className="mt-[2px] flex h-10 border border-b-0 border-[#a0a0a0]">
        <div className="flex flex-1 flex-col justify-end overflow-hidden bg-white pl-[2px] font-[Liberation_Mono,monospace] text-[13px] leading-4 text-[#202020]">
          <p>Comando:CANCELAR</p>
          <p>Comando:CANCELAR</p>
          <p>Comando:</p>
        </div>
        <div className="flex w-[18px] flex-col items-center justify-between bg-[#f0f0f0] py-[2px]">
          <ScrollArrow label="Subir" d="M1 6l3-4 3 4" />
          <ScrollArrow label="Descer" d="M1 2l3 4 3-4" />
        </div>
      </div>
      <div className="flex h-5 items-start border-t border-black bg-[#f0f0f0]">
        <NavButtons />
        <SheetTab label="Comandos" active width={78} className="z-10 w-[78px]" />
        <SheetTab label="Processamentos" width={112} className="-ml-1 w-28" />
        <div className="ml-auto flex h-full w-[554px] items-center pb-[2px]">
          <span className="mr-1 h-[14px] w-1 border border-[#808080] bg-white" />
          <ScrollArrow label="Esquerda" d="M6 1L2 4l4 3" />
          <span className="h-[14px] w-[18px] bg-[#cdcdcd]" />
          <span className="flex-1" />
          <ScrollArrow label="Direita" d="M2 1l4 3-4 3" />
          <span className="w-[18px]" />
        </div>
      </div>
    </section>
  );
}

const sideTools = 'propriedades borracha copiarObj espelhar offset escalaQ matriz mover girar escala esticar aparar estender quebrar quebrar2 concordar chanfrar explodir';

const status: [string, boolean, string][] = [
  ['ELEVAÇÃO .Z', false, 'w-[80px]'],
  ['ORTOGONAL', false, 'w-[80px]'],
  ['ENGATE', true, 'w-[55px]'],
  ['E=267347,817 N=8126648,521 Z=0,000', true, 'w-[206px]'],
  ['CAP', false, 'w-[26px]'],
  ['NUM', true, 'w-[32px]'],
  ['SCRL', false, 'w-[32px]'],
];

export default function App() {
  return (
    <div className="flex h-screen flex-col overflow-hidden bg-white font-[Open_Sans,sans-serif] text-black">
      <header className="flex h-[23px] shrink-0 items-center pl-[2px] text-[12px] text-[#8f8f8f]">
        <svg viewBox="0 0 16 16" className="mr-[5px] h-4 w-4">
          <rect width="16" height="16" fill="#176f68" />
          <path d="M1 13l4-6 4 4M5 4h9v8" fill="none" stroke="#cfe4e0" strokeWidth="2" />
          <path d="M14 3L4 14" stroke="#fff" strokeWidth="2" />
        </svg>
        <h1 className="flex-1">GeoOfficeV2 - [GPX - Garmin.cad]</h1>
        <div className="flex pb-[2px] pr-[2px]">
          {[['Minimizar', 'M0 5.5h10'], ['Restaurar', 'M0.5 2.5h7v7h-7zM2.5 2V0.5h7v7H8'], ['Fechar', 'M0 0l10 10M10 0L0 10']].map(([label, d]) => (
            <button key={label} type="button" aria-label={label} className="flex w-[46px] justify-center">
              <svg viewBox="0 0 10 10" className="h-[10px] w-[10px]" fill="none" stroke="#8f8f8f"><path d={d} /></svg>
            </button>
          ))}
        </div>
      </header>

      <nav className="mr-px flex h-6 shrink-0 items-center border-b border-r border-t border-b-[#acacac] border-r-[#acacac] border-t-[#f0f0f0] text-[11px]">
        <span className="ml-1 mr-1 h-[18px] w-[2px] bg-[repeating-linear-gradient(#bdbdbd_0_2px,transparent_2px_4px)]" />
        <svg viewBox="0 0 16 12" className="mr-[10px] h-3 w-4" shapeRendering="crispEdges">
          <path d="M1.5 .5h13v10h-13l-1-1v-8z" fill="#ddd" stroke="#000" />
          <path d="M3.5 1v10M11.5 11V8.5h3M0 11h15" stroke="#000" fill="none" />
        </svg>
        <div className="flex flex-1 gap-[15px]">
          {menus.map(m => <button key={m} type="button">{m}</button>)}
        </div>
        <div className="mr-[2px] mt-[6px] flex gap-[2px]">
          <Mdi label="Minimizar janela" d="M1 6h5" />
          <Mdi label="Restaurar janela" d="M0 4h5v3H1V4M3 1h4v3" />
          <Mdi label="Fechar janela" d="M1 1l6 6M7 1L1 7" />
        </div>
      </nav>

      <div className="shrink-0">
        <div className="flex">
          <Toolbar items="novo abrir salvar adicionar | inicio | recortar copiar copiarBase colar colarEspecial pincel | desfazer refazer | painelEsq painelInf painelXY quadro | imprimir visualizarImp | ajuda" />
          <Toolbar items="cascata ladoH ladoV organizar" />
          <Toolbar items="tabela bussola globo | maleta | poligonal | planta terreno perfil secao terreno3d relatorio" />
        </div>
        <div className="flex">
          <Toolbar items="camadaAtual camadas lampada camadasAzul">
            <span className="ml-[7px] mr-1 h-3 w-3 bg-black" />
            <div className="flex w-[48px] justify-between">
              <svg viewBox="0 0 16 16" className="h-4 w-4"><Bulb c="#ffff90" /></svg>
              <svg viewBox="0 0 16 16" className="h-4 w-4"><path d="M3 8V4q2-4 5 0v2M6 6.5h8v8H6z" fill="#f0e840" stroke="#706800" strokeWidth="1.5" /></svg>
              <svg viewBox="0 0 16 16" className="h-4 w-4"><path d="M4 7V2h6v5M2 8h10l2 4-3 2H4z" fill="#ddd" stroke="#707070" /><path d="M3 9l9 5" stroke="#4a78b8" /></svg>
            </div>
            <Combo label="Camada" value="WayPoints" className="ml-[3px] w-[123px]" />
            <span className="w-1" />
            <Sep />
            <ToolButton name="balde" />
            <svg viewBox="0 0 10 10" className="mx-[6px] h-[10px] w-[10px]"><path d="M0.5 0.5h9v9h-9zM1 1l8 8" fill="none" stroke="#000" /></svg>
            <Combo label="Cor" value="Da Camada" className="w-[86px]" />
            <ToolButton name="tipoLinha" />
            <span className="ml-[11px] h-px w-[74px] bg-black" />
            <Combo label="Tipo de linha" value="Da Camada" className="w-[93px]" />
            <span className="w-[3px]" />
            <Sep />
            <ToolButton name="espessura" />
            <Combo label="Espessura" value="Da Camada" className="ml-[73px] w-[75px]" />
            <span className="w-px" />
          </Toolbar>
        </div>
        <div className="flex">
          <Toolbar items="ponto linha polilinha dupla spline arco arcoTan circulo3 circulo2 circuloR circuloTan retangulo retInclinado paralelo texto textoCurvo tabelaCad medir hachura" />
          <Toolbar items="fim meio inter interAp centro quadrante tangente perp insercao no proximo semSnap" />
          <Toolbar items="zoomJan zoomExt zoomMais mao zoomAnt zoomTudo" />
        </div>
        <div className="flex">
          <Toolbar items="gInserir gMover gEmpurrar gXY1 gXY2 gREF" />
          <Toolbar items="gPagina g123 gTroca gOrdem |">
            <div className="relative ml-[3px] flex w-[154px] items-center">
              <select aria-label="Estilo" disabled className="h-5 w-full appearance-none bg-[#f0f0f0]" />
              <span className="absolute right-0 flex h-[18px] w-[14px] items-center justify-center border border-[#bfbfbf] bg-[#ccc]"><Chevron /></span>
            </div>
            <span className="w-1" />
            <Sep />
            <ToolButton name="gCookie" />
            <svg viewBox="0 0 8 5" className="-mr-[11px] mb-[10px] ml-[2px] h-[5px] w-2" fill="none" stroke="#000" strokeWidth="1.2"><path d="M0.5 0l2.5 2.5L0.5 5M4.5 0L7 2.5 4.5 5" /></svg>
          </Toolbar>
          <Toolbar className="ml-auto" items="alvo alvoMenu plantaMenu foto secaoMenu perfilMenu estacas faixas rio" />
          <Toolbar className="mr-[218px]" items="trena transferidor rampa1 rampa2 rampa3" />
        </div>
        <div className="flex">
          <Toolbar items="gTriang gLeque gBloco gZ1 gZ2 gZ3" />
          <Toolbar items="area1 area2 area3 parcela planilha apagarLote | lista" />
          <Toolbar items="shpOut paOut | shpIn paIn | lote loteNum | etiqueta filtroPonto filtroLinha filtroArea hachVerde hachCiano pontos | gSigma barra | satelite" />
        </div>
      </div>

      <main className="mt-px flex min-h-0 flex-1">
        <Properties />
        <div className="ml-[5px] flex min-w-0 flex-1 flex-col">
          <Canvas />
          <div className="flex h-[18px] shrink-0 items-start border-t border-[#404040] bg-[#f0f0f0]">
            <NavButtons />
            <SheetTab label="Mapa" active width={50} className="w-[50px]" />
          </div>
          <Console />
        </div>
        <div className="ml-[2px] h-[456px] w-7 shrink-0 border-b border-r border-[#acacac] pt-[3px]">
          <span className="mx-auto mb-1 block h-[2px] w-[22px] bg-[repeating-linear-gradient(90deg,#bdbdbd_0_2px,transparent_2px_4px)]" />
          <div className="flex flex-col items-center">
            {sideTools.split(' ').map(n => (
              <button key={n} type="button" aria-label={n} className="flex h-6 w-6 items-center justify-center"><Icon name={n} /></button>
            ))}
          </div>
          <svg viewBox="0 0 3 6" className="ml-[8px] mt-1 h-[6px] w-[3px]"><path d="M3 0v6L0 3z" /></svg>
        </div>
      </main>

      <footer className="flex h-[19px] shrink-0 items-center border-b-2 border-t border-b-[#333] border-t-[#d0d0d0] bg-[#f0f0f0] pl-1 text-[11px]">
        <span className="flex-1 pt-px">Pronto</span>
        {status.map(([text, on, w], i) => (
          <span key={text} className={`h-full overflow-hidden whitespace-nowrap pl-1 leading-[18px] ${i ? 'border-l border-[#c8c8c8]' : ''} ${on ? '' : 'text-[#808080]'} ${w}`}>{text}</span>
        ))}
      </footer>
    </div>
  );
}
